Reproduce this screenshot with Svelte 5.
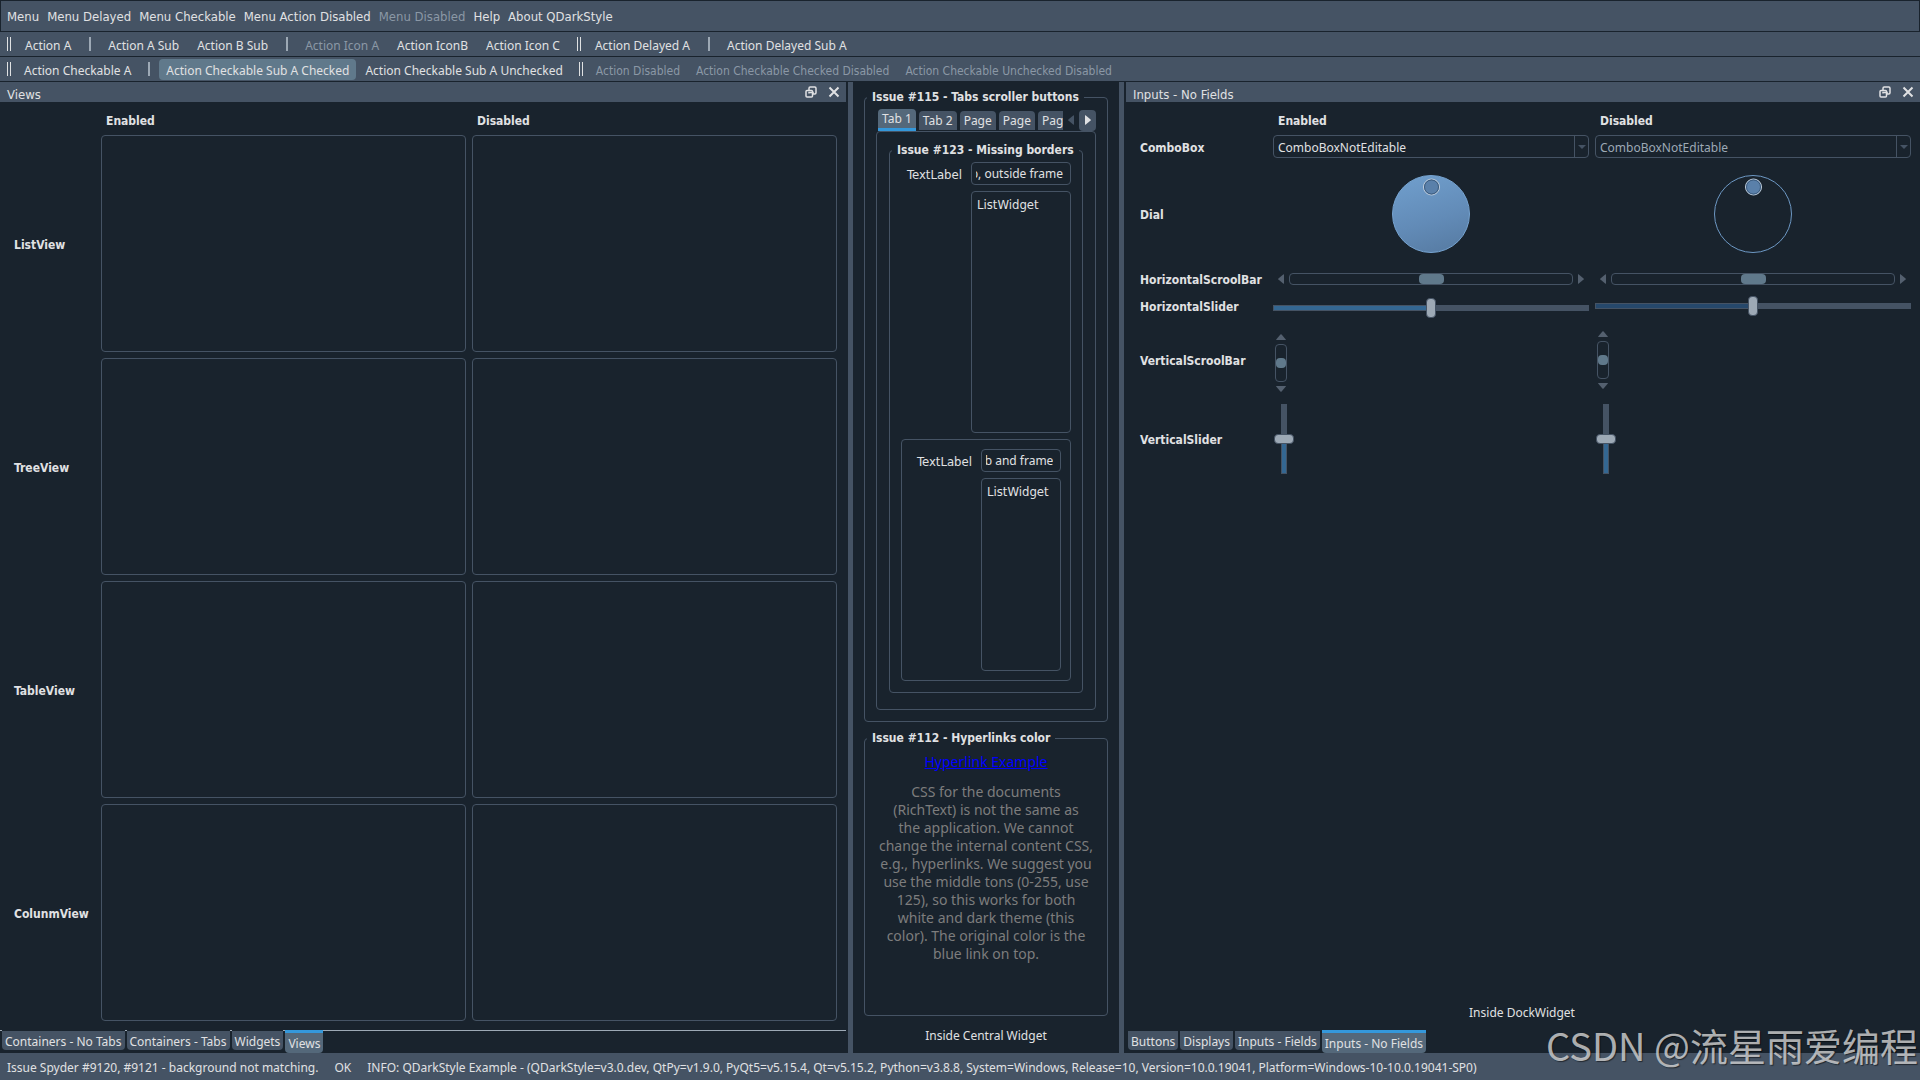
<script lang="ts">
	import { onMount } from 'svelte';

	const menus = [
		{ text: 'Menu' },
		{ text: 'Menu Delayed' },
		{ text: 'Menu Checkable' },
		{ text: 'Menu Action Disabled' },
		{ text: 'Menu Disabled', disabled: true },
		{ text: 'Help' },
		{ text: 'About QDarkStyle' }
	];

	// 'handle' and 'sep' are drawn as bars, everything else is a tool button
	const toolbars = [
		{
			name: 'actions',
			items: [
				{ kind: 'handle' },
				{ text: 'Action A' },
				{ kind: 'sep' },
				{ text: 'Action A Sub' },
				{ text: 'Action B Sub' },
				{ kind: 'sep' },
				{ text: 'Action Icon A', disabled: true },
				{ text: 'Action IconB' },
				{ text: 'Action Icon C' },
				{ kind: 'handle' },
				{ text: 'Action Delayed A' },
				{ kind: 'sep' },
				{ text: 'Action Delayed Sub A' }
			]
		},
		{
			name: 'checkable',
			items: [
				{ kind: 'handle' },
				{ text: 'Action Checkable A' },
				{ kind: 'sep' },
				{ text: 'Action Checkable Sub A Checked', checked: true },
				{ text: 'Action Checkable Sub A Unchecked' },
				{ kind: 'handle' },
				{ text: 'Action Disabled', disabled: true },
				{ text: 'Action Checkable Checked Disabled', disabled: true },
				{ text: 'Action Checkable Unchecked Disabled', disabled: true }
			]
		}
	];

	const views = ['ListView', 'TreeView', 'TableView', 'ColunmView'];
	const leftTabs = ['Containers - No Tabs', 'Containers - Tabs', 'Widgets', 'Views'];
	const rightTabs = ['Buttons', 'Displays', 'Inputs - Fields', 'Inputs - No Fields'];
	const pageTabs = ['Tab 1', 'Tab 2', 'Page', 'Page', 'Page'];
	const states = ['enabled', 'disabled'];

	let leftTab = $state('Views');
	let rightTab = $state('Inputs - No Fields');
	let pageTab = $state(0);
	let horizontal = $state([50, 50]);
	let vertical = $state([50, 50]);

	let outsideEdit: HTMLInputElement;
	let insideEdit: HTMLInputElement;

	onMount(() => {
		// keep the end of the text in view, like a line edit with its cursor at the end
		outsideEdit.scrollLeft = outsideEdit.scrollWidth;
		insideEdit.scrollLeft = insideEdit.scrollWidth;
	});
</script>

{#snippet dockTitle(title: string)}
	<header class="dock-title">
		<h2>{title}</h2>
		<button aria-label="Float">
			<svg width="12" height="12" viewBox="0 0 12 12" fill="none" stroke="currentColor" stroke-width="1.5">
				<path d="M4 4V2.2Q4 1 5.200 1H9.800Q11 1 11 2.200V6.800Q11 8 9.800 8H8" />
				<rect x="1" y="4.500" width="6.500" height="6.500" rx="1" />
				<path d="M4 7.500V6.500H8V8" />
			</svg>
		</button>
		<button aria-label="Close">
			<svg width="12" height="12" viewBox="0 0 12 12" fill="none" stroke="currentColor" stroke-width="2">
				<path d="M1.500 1.500L10.500 10.500M10.500 1.500L1.500 10.500" />
			</svg>
		</button>
	</header>
{/snippet}

{#snippet arrow(direction: string)}
	<svg class="arrow {direction}" width="6" height="10" viewBox="0 0 6 10" fill="currentColor">
		<path d="M0 0.500Q0 0 0.500 0.200L5.600 4.400Q6 5 5.600 5.600L0.500 9.800Q0 10 0 9.500Z" />
	</svg>
{/snippet}

<div class="window">
	<nav class="menubar">
		{#each menus as menu}
			<button disabled={menu.disabled}>{menu.text}</button>
		{/each}
	</nav>

	{#each toolbars as toolbar}
		<div class="toolbar {toolbar.name}">
			{#each toolbar.items as item}
				{#if item.kind}
					<span class={item.kind}></span>
				{:else}
					<button class:checked={item.checked} disabled={item.disabled}>{item.text}</button>
				{/if}
			{/each}
		</div>
	{/each}

	<main>
		<section class="dock left">
			{@render dockTitle('Views')}
			<div class="views">
				<span></span>
				<strong class="heading">Enabled</strong>
				<strong class="heading">Disabled</strong>
				{#each views as view}
					<strong class="name">{view}</strong>
					<div class="view"></div>
					<div class="view"></div>
				{/each}
			</div>
			<div class="dock-tabs lined">
				{#each leftTabs as tab}
					<button class:selected={tab === leftTab} onclick={() => (leftTab = tab)}>{tab}</button>
				{/each}
			</div>
		</section>

		<div class="splitter"></div>

		<section class="central">
			<fieldset class="issue-tabs">
				<legend>Issue #115 - Tabs scroller buttons</legend>
				<div class="tabbar">
					<div class="tabs">
						{#each pageTabs as tab, i}
							<button class:selected={i === pageTab} onclick={() => (pageTab = i)}>{tab}</button>
						{/each}
					</div>
					<button class="scroller" aria-label="Scroll left" disabled>{@render arrow('left')}</button>
					<button class="scroller" aria-label="Scroll right">{@render arrow('right')}</button>
				</div>
				<div class="pane">
					<fieldset class="borders">
						<legend>Issue #123 - Missing borders</legend>
						<div class="form">
							<label for="outside">TextLabel</label>
							<input id="outside" type="text" value="Inside tab, outside frame" bind:this={outsideEdit} />
							<ul class="list"><li>ListWidget</li></ul>
						</div>
						<div class="form frame">
							<label for="inside">TextLabel</label>
							<input id="inside" type="text" value="Inside tab and frame" bind:this={insideEdit} />
							<ul class="list"><li>ListWidget</li></ul>
						</div>
					</fieldset>
				</div>
			</fieldset>

			<fieldset class="issue-links">
				<legend>Issue #112 - Hyperlinks color</legend>
				<a href="#example">Hyperlink Example</a>
				<p>
					CSS for the documents<br />
					(RichText) is not the same as<br />
					the application. We cannot<br />
					change the internal content CSS,<br />
					e.g., hyperlinks. We suggest you<br />
					use the middle tons (0-255, use<br />
					125), so this works for both<br />
					white and dark theme (this<br />
					color). The original color is the<br />
					blue link on top.
				</p>
			</fieldset>

			<div class="caption">Inside Central Widget</div>
		</section>

		<div class="splitter"></div>

		<section class="dock right">
			{@render dockTitle('Inputs - No Fields')}
			<div class="inputs">
				<span></span>
				<strong class="heading">Enabled</strong>
				<strong class="heading">Disabled</strong>

				<label class="name" for="combo-enabled">ComboBox</label>
				{#each states as state}
					<div class="combo">
						<select id="combo-{state}" aria-label="ComboBox" disabled={state === 'disabled'}>
							<option>ComboBoxNotEditable</option>
						</select>
						<span class="drop"></span>
					</div>
				{/each}

				<label class="name" for="dial-enabled">Dial</label>
				{#each states as state}
					<div class="dial {state}">
						<svg width="82" height="82" viewBox="0 0 82 82">
							<defs>
								<linearGradient id="face" x1="0.3" y1="0" x2="0.6" y2="1">
									<stop offset="0" stop-color="#6f9dcb" />
									<stop offset="0.600" stop-color="#628bb7" />
									<stop offset="1" stop-color="#587da5" />
								</linearGradient>
							</defs>
							<circle class="face" cx="41" cy="41" r="38.500" />
							<circle class="knob" cx="41.500" cy="14" r="8" />
							<circle class="rim" cx="41.500" cy="14" r="7" />
						</svg>
						<input id="dial-{state}" type="range" aria-label="Dial" disabled={state === 'disabled'} />
					</div>
				{/each}

				<label class="name" for="hscroll-enabled">HorizontalScroolBar</label>
				{#each states as state}
					<div class="scroll horizontal {state}">
						<button aria-label="Left" disabled={state === 'disabled'}>{@render arrow('left')}</button>
						<input id="hscroll-{state}" type="range" aria-label="HorizontalScroolBar" disabled={state === 'disabled'} />
						<button aria-label="Right" disabled={state === 'disabled'}>{@render arrow('right')}</button>
					</div>
				{/each}

				<label class="name" for="hslider-enabled">HorizontalSlider</label>
				{#each states as state, i}
					<input
						class="slider horizontal {state}"
						id="hslider-{state}"
						type="range"
						aria-label="HorizontalSlider"
						disabled={state === 'disabled'}
						bind:value={horizontal[i]}
						style="--fill: {horizontal[i]}%"
					/>
				{/each}

				<label class="name" for="vscroll-enabled">VerticalScroolBar</label>
				{#each states as state}
					<div class="scroll vertical {state}">
						<button aria-label="Up" disabled={state === 'disabled'}>{@render arrow('up')}</button>
						<input id="vscroll-{state}" type="range" aria-label="VerticalScroolBar" disabled={state === 'disabled'} />
						<button aria-label="Down" disabled={state === 'disabled'}>{@render arrow('down')}</button>
					</div>
				{/each}

				<label class="name" for="vslider-enabled">VerticalSlider</label>
				{#each states as state, i}
					<input
						class="slider vertical {state}"
						id="vslider-{state}"
						type="range"
						aria-label="VerticalSlider"
						disabled={state === 'disabled'}
						bind:value={vertical[i]}
						style="--fill: {vertical[i]}%"
					/>
				{/each}
			</div>
			<div class="caption">Inside DockWidget</div>
			<div class="dock-tabs">
				{#each rightTabs as tab}
					<button class:selected={tab === rightTab} onclick={() => (rightTab = tab)}>{tab}</button>
				{/each}
			</div>
		</section>
	</main>

	<footer>
		<span>Issue Spyder #9120, #9121 - background not matching.</span>
		<span>OK</span>
		<span>
			INFO: QDarkStyle Example - (QDarkStyle=v3.0.dev, QtPy=v1.9.0, PyQt5=v5.15.4, Qt=v5.15.2,
			Python=v3.8.8, System=Windows, Release=10, Version=10.0.19041, Platform=Windows-10-10.0.19041-SP0)
		</span>
	</footer>

	<div class="watermark">CSDN @流星雨爱编程</div>
</div>

<style>
	:global(body) {
		background: #19232d;
	}

	.window {
		--dark: #19232d;
		--slate: #455364;
		--text: #e0e1e3;
		--muted: #8b98a6;
		--accent: #3498db;
		position: relative;
		display: flex;
		flex-direction: column;
		box-sizing: border-box;
		min-height: 100vh;
		background: var(--dark);
		color: var(--text);
		font: 12px/16px 'Noto Sans', sans-serif;
		overflow: hidden;
	}

	.window * {
		box-sizing: border-box;
	}

	button,
	input,
	select {
		margin: 0;
		padding: 0;
		border: 0;
		background: none;
		color: inherit;
		font: inherit;
	}

	button {
		white-space: nowrap;
	}

	button:disabled {
		color: var(--muted);
	}

	.menubar,
	.dock-title,
	.form label,
	.list {
		font: 13px/16px 'DejaVu Sans Condensed', 'DejaVu Sans', sans-serif;
	}

	strong,
	legend,
	.name {
		font: bold 12px/16px 'DejaVu Sans Condensed', 'DejaVu Sans', sans-serif;
	}

	.menubar {
		display: flex;
		gap: 8px;
		height: 32px;
		padding: 2px 6px 0;
		background: var(--slate);
		border: 1px solid var(--dark);
	}

	.toolbar {
		display: flex;
		align-items: center;
		gap: 2px;
		height: 25px;
		padding: 0 7px;
		background: var(--slate);
		border-bottom: 1px solid var(--dark);
	}

	.toolbar button {
		height: 21px;
		padding: 3px 8px 0;
		border-radius: 4px;
	}

	.checkable button {
		padding: 3px 7px 0;
	}

	.checkable button:disabled {
		font-family: 'DejaVu Sans Condensed', 'DejaVu Sans', sans-serif;
	}

	.toolbar .checked {
		background: #60798b;
	}

	.handle {
		width: 4px;
		height: 14px;
		margin: 0 4px 0 7px;
		border: solid #dfe1e2;
		border-width: 0 1px;
	}

	.handle:first-child {
		margin-left: 0;
	}

	.sep {
		width: 2px;
		height: 14px;
		margin: 0 7px 0 8px;
		background: #9da9b5;
	}

	main {
		flex: 1;
		display: grid;
		grid-template-columns: minmax(0, 848fr) 5px minmax(0, 266fr) 5px minmax(0, 796fr);
	}

	.splitter {
		background: var(--slate);
	}

	.dock {
		display: flex;
		flex-direction: column;
	}

	.dock.left {
		padding-right: 2px;
	}

	.dock-title {
		display: flex;
		align-items: center;
		gap: 11px;
		height: 20px;
		padding: 0 6px 0 7px;
		background: var(--slate);
	}

	.right .dock-title {
		margin-left: 2px;
	}

	.dock-title h2 {
		flex: 1;
		margin: 0;
		font: inherit;
		padding-top: 5px;
	}

	.dock-title button {
		display: flex;
	}

	.heading {
		height: 18px;
		padding: 2px 5px 0;
	}

	.views {
		flex: 1;
		display: grid;
		grid-template-columns: 84px 1fr 1fr;
		grid-template-rows: 18px repeat(4, 1fr);
		gap: 6px;
		padding: 9px 9px 9px 11px;
	}

	.name {
		align-self: center;
		padding: 2px 0 0 3px;
	}

	.view {
		border: 1px solid var(--slate);
		border-radius: 4px;
	}

	.dock-tabs {
		display: flex;
		align-items: flex-start;
		gap: 2px;
		height: 23px;
		padding: 0 4px;
	}

	.lined {
		padding: 0 2px;
		background: linear-gradient(#9da9b5, #9da9b5) top / 100% 1px no-repeat;
	}

	.dock-tabs button {
		height: 20px;
		padding: 2px 3px 0;
		background: var(--slate);
		border-top: 1px solid var(--dark);
		border-radius: 0 0 4px 4px;
	}

	.dock-tabs .selected {
		height: 23px;
		background: #54687a;
		border-top: 3px solid var(--accent);
	}

	.central {
		display: flex;
		flex-direction: column;
		gap: 8px;
		padding: 7px 11px 9px;
	}

	fieldset {
		display: flex;
		flex-direction: column;
		min-width: 0;
		margin: 0;
		padding: 4px 11px 11px;
		border: 1px solid var(--slate);
		border-radius: 4px;
	}

	legend {
		margin-left: -9px;
		padding: 0 5px;
		white-space: nowrap;
	}

	.issue-tabs {
		flex: 1;
	}

	.tabbar {
		display: flex;
		align-items: center;
		height: 22px;
	}

	.tabs {
		flex: 1;
		display: flex;
		align-items: flex-end;
		gap: 3px;
		height: 22px;
		padding-left: 2px;
		overflow: hidden;
	}

	.tabs button {
		flex: none;
		height: 19px;
		margin-bottom: 1px;
		padding: 0 4px;
		background: var(--slate);
		border-radius: 4px 4px 0 0;
	}

	.tabs .selected {
		height: 22px;
		margin: 0;
		background: #54687a;
		border-bottom: 3px solid var(--accent);
	}

	.scroller {
		display: grid;
		place-items: center;
		width: 17px;
		height: 21px;
		border-radius: 4px;
		background: var(--slate);
	}

	.scroller:disabled {
		width: 16px;
		background: none;
		color: var(--slate);
	}

	.pane {
		flex: 1;
		display: flex;
		padding: 10px 12px 16px;
		border: 1px solid var(--slate);
		border-radius: 4px;
	}

	.borders {
		flex: 1;
		gap: 6px;
	}

	.form {
		flex: 1 1 49px;
		display: grid;
		grid-template-columns: 64px minmax(0, 1fr);
		grid-template-rows: 23px 1fr;
		gap: 6px;
	}

	.form label {
		align-self: center;
		padding: 2px 0 0 6px;
	}

	.form input {
		width: 100%;
		padding: 1px 7px 0 4px;
		border: 1px solid var(--slate);
		border-radius: 4px;
	}

	.list {
		grid-column: 2;
		margin: 0;
		padding: 5px;
		border: 1px solid var(--slate);
		border-radius: 4px;
		list-style: none;
	}

	.frame {
		flex-basis: 20px;
		padding: 9px;
		border: 1px solid var(--slate);
		border-radius: 4px;
	}

	.issue-links {
		min-height: 286px;
		padding-top: 7px;
		font-size: 14px;
		line-height: 18px;
	}

	.issue-links a {
		align-self: center;
		color: #0000ff;
	}

	.issue-links p {
		margin: 12px 0 0;
		color: #7d7d7d;
		text-align: center;
		white-space: nowrap;
	}

	.caption {
		padding: 4px 0 0;
		text-align: center;
	}

	.dock .caption {
		margin-top: auto;
		padding: 0 0 9px;
	}

	.inputs {
		display: grid;
		grid-template-columns: 133px 1fr 1fr;
		grid-template-rows: 18px 23px 100px 18px 24px 72px 74px;
		gap: 6px;
		align-items: center;
		padding: 9px 9px 9px 10px;
	}

	.inputs .name {
		padding-left: 6px;
	}

	.combo {
		display: flex;
		height: 23px;
		border: 1px solid var(--slate);
		border-radius: 4px;
	}

	.combo select {
		flex: 1;
		padding: 2px 0 0 4px;
		appearance: none;
	}

	.combo select:disabled {
		color: #9da9b5;
		opacity: 1;
	}

	.drop {
		display: grid;
		place-items: center;
		width: 14px;
		border-left: 1px solid var(--slate);
	}

	.drop::before {
		content: '';
		border: 4px solid transparent;
		border-top-color: var(--slate);
		border-bottom: 0;
	}

	.dial {
		position: relative;
		display: grid;
		place-items: center;
	}

	.dial input {
		position: absolute;
		width: 80px;
		height: 80px;
		opacity: 0;
	}

	.face {
		fill: url(#face);
		stroke: #76a3d0;
	}

	.disabled .face {
		fill: none;
		stroke: #6d98c4;
	}

	.knob {
		fill: #5a80aa;
		stroke: #c3d0de;
	}

	.rim {
		fill: none;
		stroke: #3d5c7e;
	}

	.arrow.left {
		transform: rotate(180deg);
	}

	.arrow.up {
		transform: rotate(-90deg);
	}

	.arrow.down {
		transform: rotate(90deg);
	}

	input[type='range'] {
		appearance: none;
	}

	.scroll {
		display: flex;
		align-items: center;
	}

	.scroll.vertical {
		flex-direction: column;
		width: 16px;
	}

	.scroll.vertical.enabled,
	.slider.horizontal.enabled {
		align-self: end;
	}

	.scroll button {
		display: grid;
		place-items: center;
		flex: none;
		width: 16px;
		height: 14px;
		color: #54606f;
	}

	.scroll input {
		flex: 1;
		min-width: 0;
		height: 12px;
		border: 1px solid var(--slate);
		border-radius: 4px;
	}

	.scroll.vertical input {
		flex: none;
		width: 12px;
		height: 38px;
		writing-mode: vertical-lr;
	}

	.scroll input::-webkit-slider-thumb {
		appearance: none;
		width: 25px;
		height: 10px;
		border-radius: 4px;
		background: #60798b;
	}

	.scroll.vertical input::-webkit-slider-thumb {
		width: 10px;
		height: 10px;
	}

	.slider {
		--color: #346792;
	}

	.slider.horizontal {
		width: 100%;
		height: 20px;
		background:
			linear-gradient(to right, var(--color) var(--fill), transparent var(--fill)) center / calc(100% - 2px) 4px no-repeat,
			linear-gradient(var(--slate), var(--slate)) center / 100% 6px no-repeat;
	}

	.slider.horizontal.disabled {
		--color: #26486b;
	}

	.slider.vertical {
		width: 22px;
		height: 70px;
		writing-mode: vertical-lr;
		direction: rtl;
		background:
			linear-gradient(to top, var(--color) var(--fill), transparent var(--fill)) center / 4px calc(100% - 2px) no-repeat,
			linear-gradient(var(--slate), var(--slate)) center / 6px 100% no-repeat;
	}

	.slider::-webkit-slider-thumb {
		appearance: none;
		box-sizing: border-box;
		width: 10px;
		height: 20px;
		border: 1px solid var(--slate);
		border-radius: 4px;
		background: #9da9b5;
	}

	.slider.vertical::-webkit-slider-thumb {
		width: 20px;
		height: 10px;
	}

	footer {
		display: flex;
		align-items: center;
		gap: 16px;
		height: 27px;
		padding: 2px 7px 0;
		background: var(--slate);
		white-space: nowrap;
	}

	.watermark {
		position: absolute;
		right: 2px;
		bottom: 8px;
		color: rgba(225, 225, 225, 0.76);
		font: 400 38px/54px 'Noto Sans CJK SC', sans-serif;
		text-shadow: 1px 1px 1px rgba(0, 0, 0, 0.5);
		pointer-events: none;
	}
</style>
